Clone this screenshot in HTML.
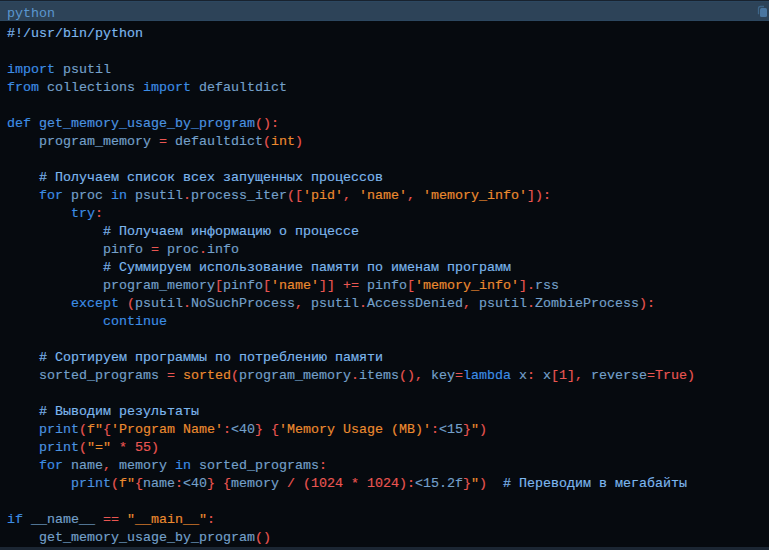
<!DOCTYPE html>
<html><head><meta charset="utf-8">
<style>
html,body{margin:0;padding:0;background:#060a0f;}
body{width:769px;height:550px;overflow:hidden;position:relative;font-family:"Liberation Mono",monospace;}
.top{position:absolute;left:0;top:0;width:769px;height:1px;background:#18222e;}
.hdr{position:absolute;left:0;top:1px;width:769px;height:20px;background:#2d4358;}
.hl2{position:absolute;left:0;top:20px;width:769px;height:1px;background:#2c4760;}
.hdr .lang{position:absolute;left:7px;top:3px;height:20px;line-height:20px;font-size:13.3333px;color:#5b97d0;}
.copy{position:absolute;left:0;top:0;}
pre{position:absolute;left:7px;top:25px;margin:0;font-family:"Liberation Mono",monospace;font-size:13.3333px;line-height:18px;color:#74a0ca;white-space:pre;-webkit-text-stroke:0.15px currentColor;}
.k{color:#3d8ee6}
.f{color:#4b93e0}
.i{color:#74a0ca}
.c{color:#7db7ee}
.s{color:#ec8b30}
.p{color:#ea5652}
.n{color:#ea5652}
.o{color:#ec8b30}
.bot{position:absolute;left:0;top:547px;width:769px;height:3px;background:#1b2633;}
</style></head><body>
<div class="top"></div>
<div class="hdr"><span class="lang">python</span></div>
<div class="hl2"></div>
<div class="hl2" style="top:1px"></div>
<svg class="copy" width="769" height="22" style="position:absolute;left:0;top:0">
<path d="M758.5 14.2 V8.5 Q758.5 6.5 760.5 6.5 H764" fill="none" stroke="#3d6587" stroke-width="1.3"/>
<rect x="760" y="8" width="7" height="9" rx="1.5" fill="#4a76a0"/>
</svg>
<pre><span class="c">#!/usr/bin/python</span>

<span class="k">import</span> <span class="i">psutil</span>
<span class="k">from</span> <span class="i">collections</span> <span class="k">import</span> <span class="i">defaultdict</span>

<span class="k">def</span> <span class="f">get_memory_usage_by_program</span><span class="p">(</span><span class="p">)</span><span class="p">:</span>
    <span class="i">program_memory</span> <span class="p">=</span> <span class="i">defaultdict</span><span class="p">(</span><span class="o">int</span><span class="p">)</span>

    <span class="c"># Получаем список всех запущенных процессов</span>
    <span class="k">for</span> <span class="i">proc</span> <span class="k">in</span> <span class="i">psutil</span><span class="p">.</span><span class="i">process_iter</span><span class="p">(</span><span class="p">[</span><span class="s">'pid'</span><span class="p">,</span> <span class="s">'name'</span><span class="p">,</span> <span class="s">'memory_info'</span><span class="p">]</span><span class="p">)</span><span class="p">:</span>
        <span class="k">try</span><span class="p">:</span>
            <span class="c"># Получаем информацию о процессе</span>
            <span class="i">pinfo</span> <span class="p">=</span> <span class="i">proc</span><span class="p">.</span><span class="i">info</span>
            <span class="c"># Суммируем использование памяти по именам программ</span>
            <span class="i">program_memory</span><span class="p">[</span><span class="i">pinfo</span><span class="p">[</span><span class="s">'name'</span><span class="p">]</span><span class="p">]</span> <span class="p">+</span><span class="p">=</span> <span class="i">pinfo</span><span class="p">[</span><span class="s">'memory_info'</span><span class="p">]</span><span class="p">.</span><span class="i">rss</span>
        <span class="k">except</span> <span class="p">(</span><span class="i">psutil</span><span class="p">.</span><span class="i">NoSuchProcess</span><span class="p">,</span> <span class="i">psutil</span><span class="p">.</span><span class="i">AccessDenied</span><span class="p">,</span> <span class="i">psutil</span><span class="p">.</span><span class="i">ZombieProcess</span><span class="p">)</span><span class="p">:</span>
            <span class="k">continue</span>

    <span class="c"># Сортируем программы по потреблению памяти</span>
    <span class="i">sorted_programs</span> <span class="p">=</span> <span class="o">sorted</span><span class="p">(</span><span class="i">program_memory</span><span class="p">.</span><span class="i">items</span><span class="p">(</span><span class="p">)</span><span class="p">,</span> <span class="i">key</span><span class="p">=</span><span class="k">lambda</span> <span class="i">x</span><span class="p">:</span> <span class="i">x</span><span class="p">[</span><span class="n">1</span><span class="p">]</span><span class="p">,</span> <span class="i">reverse</span><span class="p">=</span><span class="n">True</span><span class="p">)</span>

    <span class="c"># Выводим результаты</span>
    <span class="f">print</span><span class="p">(</span><span class="s">f"</span><span class="p">{</span><span class="s">'Program Name'</span><span class="p">:</span><span class="i">&lt;40</span><span class="p">}</span><span class="s"> </span><span class="p">{</span><span class="s">'Memory Usage (MB)'</span><span class="p">:</span><span class="i">&lt;15</span><span class="p">}</span><span class="s">"</span><span class="p">)</span>
    <span class="f">print</span><span class="p">(</span><span class="s">"="</span> <span class="p">*</span> <span class="n">55</span><span class="p">)</span>
    <span class="k">for</span> <span class="i">name</span><span class="p">,</span> <span class="i">memory</span> <span class="k">in</span> <span class="i">sorted_programs</span><span class="p">:</span>
        <span class="f">print</span><span class="p">(</span><span class="s">f"</span><span class="p">{</span><span class="i">name</span><span class="p">:</span><span class="i">&lt;40</span><span class="p">}</span><span class="s"> </span><span class="p">{</span><span class="i">memory</span> <span class="p">/</span> <span class="p">(</span><span class="n">1024</span> <span class="p">*</span> <span class="n">1024</span><span class="p">)</span><span class="p">:</span><span class="i">&lt;15.2f</span><span class="p">}</span><span class="s">"</span><span class="p">)</span>  <span class="c"># Переводим в мегабайты</span>

<span class="k">if</span> <span class="i">__name__</span> <span class="p">=</span><span class="p">=</span> <span class="s">"__main__"</span><span class="p">:</span>
    <span class="i">get_memory_usage_by_program</span><span class="p">(</span><span class="p">)</span></pre>
<div class="bot"></div>
</body></html>
